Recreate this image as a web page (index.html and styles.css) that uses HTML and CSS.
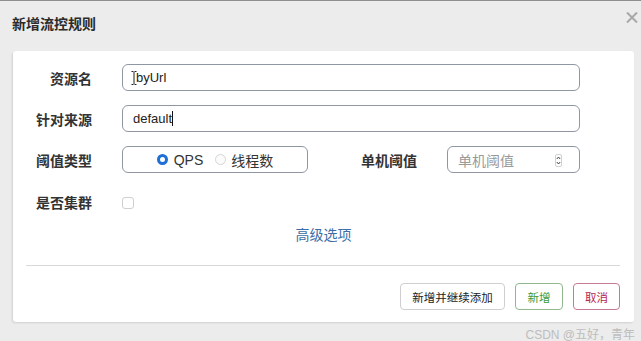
FILE: index.html
```html
<!DOCTYPE html>
<html lang="zh-CN">
<head>
    <meta charset="UTF-8">
    <meta name="viewport" content="width=device-width, initial-scale=1.0">
    <title>新增流控规则</title>
    <link rel="stylesheet" href="styles.css">
</head>
<body>
    <div class="dialog">
        <div class="dialog-header">
            <span class="dialog-title">新增流控规则</span>
            <svg class="dialog-close" width="12" height="11" viewBox="0 0 12 11">
                <path d="M1 0.5 L11 10.5 M11 0.5 L1 10.5" stroke="#a8a8a8" stroke-width="2" fill="none"/>
            </svg>
        </div>

        <div class="panel">
            <div class="form">
                <div class="form-row">
                    <label class="form-label">资源名</label>
                    <div class="input input-wide">
                        <svg class="ibeam" width="6" height="14" viewBox="0 0 6 14">
                            <path d="M0.5 0.5 H2.5 M3.5 0.5 H5.5 M3 1 V13 M0.5 13.5 H2.5 M3.5 13.5 H5.5" stroke="#222" stroke-width="1" fill="none"/>
                        </svg>
                        <span>byUrl</span>
                    </div>
                </div>
                <div class="form-row">
                    <label class="form-label">针对来源</label>
                    <div class="input input-wide">
                        <span>default</span><span class="caret"></span>
                    </div>
                </div>
                <div class="form-row row-gap">
                    <label class="form-label">阈值类型</label>
                    <div class="radio-box">
                        <span class="radio radio-on"></span>
                        <span class="radio-text">QPS</span>
                        <span class="radio"></span>
                        <span class="radio-text">线程数</span>
                    </div>
                    <label class="form-label label-flex">单机阈值</label>
                    <div class="input input-num">
                        <span class="placeholder">单机阈值</span>
                        <svg class="spinner" width="7" height="13" viewBox="0 0 7 13">
                            <rect x="0.5" y="0.5" width="6" height="12" rx="1.5" fill="#fff" stroke="#d0d0d0"/>
                            <path d="M1.8 5 L3.5 3 L5.2 5 M1.8 8 L3.5 10 L5.2 8" stroke="#444" stroke-width="1" fill="none"/>
                        </svg>
                    </div>
                </div>
                <div class="form-row row-last">
                    <label class="form-label">是否集群</label>
                    <span class="checkbox"></span>
                </div>
            </div>

            <div class="advanced">高级选项</div>
            <div class="divider"></div>

            <div class="footer">
                <button class="btn btn-more">新增并继续添加</button>
                <button class="btn btn-ok">新增</button>
                <button class="btn btn-cancel">取消</button>
            </div>
        </div>

        <div class="watermark">CSDN @五好，青年</div>
    </div>
</body>
</html>
```

FILE: styles.css
```css
body {
    font-family: "Liberation Sans", "Noto Sans CJK SC", sans-serif;
    background-color: #ececec;
    color: #333;
    margin: 0;
    padding: 0;
    border-top: 1px solid #8e8e8e;
}
.dialog {
    height: 340px;
}
.dialog-header {
    height: 50px;
    display: flex;
    justify-content: space-between;
    align-items: flex-start;
    padding: 0 3px 0 12px;
}
.dialog-title {
    margin-top: 14px;
    font-size: 14px;
    font-weight: bold;
    line-height: 18px;
    color: #2b2b2b;
}
.dialog-close {
    margin-top: 11px;
}
.panel {
    margin: 0 7px 0 13px;
    height: 271px;
    box-sizing: border-box;
    background-color: #ffffff;
    border-radius: 3px;
    box-shadow: -1px 1px 2px rgba(0, 0, 0, 0.12);
    padding-top: 13px;
}
.form {
    padding-right: 54px;
}
.form-row {
    display: flex;
    align-items: center;
    height: 27px;
    margin-bottom: 14px;
}
.row-gap {
    margin-bottom: 15px;
}
.row-last {
    margin-bottom: 0;
}
.form-label {
    width: 79px;
    margin-right: 30px;
    text-align: right;
    font-size: 14px;
    font-weight: bold;
    color: #333;
}
.label-flex {
    flex: 1;
    width: auto;
}
.input {
    height: 27px;
    box-sizing: border-box;
    border: 1px solid #8f98a2;
    border-radius: 6px;
    display: flex;
    align-items: center;
    padding-left: 10px;
    font-size: 13px;
    color: #222;
}
.input-wide {
    flex: 1;
}
.ibeam {
    margin: 0 -1px 0 -2px;
}
.caret {
    width: 1px;
    height: 15px;
    background-color: #111;
}
.input-num {
    width: 133px;
    padding-right: 17px;
    justify-content: space-between;
}
.placeholder {
    font-size: 14px;
    color: #9a9a9a;
}
.spinner {
    margin-top: 1px;
}
.radio-box {
    width: 186px;
    height: 27px;
    box-sizing: border-box;
    border: 1px solid #8f98a2;
    border-radius: 6px;
    display: flex;
    align-items: center;
    justify-content: center;
    font-size: 14px;
    color: #333;
}
.radio {
    width: 11px;
    height: 11px;
    box-sizing: border-box;
    border-radius: 50%;
    border: 1px solid #d6d6d6;
    background-color: #fbfbfb;
    margin-right: 5px;
}
.radio-on {
    border: 3px solid #1f6fd6;
    background-color: #ffffff;
    margin-right: 6px;
}
.radio-text {
    margin-right: 12px;
}
.radio-text:last-child {
    margin-right: 0;
}
.checkbox {
    width: 12px;
    height: 12px;
    box-sizing: border-box;
    border: 1px solid #cfcfcf;
    border-radius: 3px;
    margin-top: 2px;
}
.advanced {
    margin-top: 10px;
    line-height: 20px;
    text-align: center;
    font-size: 14px;
    color: #3a6ea5;
}
.divider {
    margin: 20px 14px 0 13px;
    height: 1px;
    background-color: #d8d8d8;
}
.footer {
    display: flex;
    justify-content: flex-end;
    gap: 10px;
    padding: 17px 14px 0 0;
}
.btn {
    height: 27px;
    padding: 0;
    white-space: nowrap;
    font-family: "Liberation Sans", "Noto Sans CJK SC", sans-serif;
    font-size: 11.5px;
    color: #222;
    background-color: #ffffff;
    border: 1px solid #cfcfcf;
    border-radius: 4px;
}
.btn-more {
    width: 105px;
}
.btn-ok {
    width: 48px;
    color: #3b9a3b;
    border-color: #8fb88f;
}
.btn-cancel {
    width: 47px;
    color: #b3264f;
    border-color: #c47b92;
}
.watermark {
    text-align: right;
    padding: 3px 6px 0 0;
    font-size: 12px;
    color: #bdbdbd;
}
```
